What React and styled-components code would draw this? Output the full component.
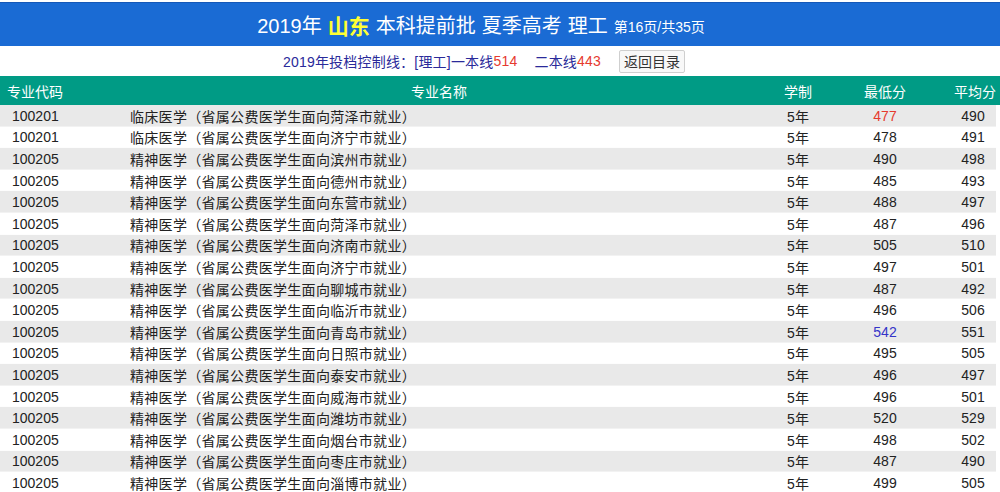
import React from "react";
import styled, { createGlobalStyle } from "styled-components";

const Global = createGlobalStyle`
  html, body { margin: 0; padding: 0; background: #fff; }
  body { font-family: "Liberation Sans", "Noto Sans CJK SC", sans-serif; overflow: hidden; }
`;

const Page = styled.div`
  padding-top: 2px;
  width: 1000px;
`;

const TitleBar = styled.div`
  height: 44px;
  background: #1a6bd4;
  border-top: 1px solid #1558b8;
  box-sizing: border-box;
  display: flex;
  align-items: center;
  justify-content: center;
  color: #fff;
  font-size: 20px;
  gap: 6px;
  padding-right: 38px;
`;

const Hl = styled.span`
  color: #ffff33;
  font-weight: bold;
  font-size: 21px;
`;

const Small = styled.span`
  font-size: 14px;
  margin-top: 3px;
`;

const SubLine = styled.div`
  height: 30px;
  display: flex;
  align-items: center;
  justify-content: center;
  font-size: 14px;
  color: #2a2a9a;
  padding-right: 32px;
  letter-spacing: 0.2px;
`;

const Red = styled.span`
  color: #e63a2e;
`;

const Gap = styled.span`
  display: inline-block;
  width: ${(p) => p.w}px;
`;

const Button = styled.button`
  font-family: inherit;
  font-size: 14px;
  color: #333;
  background: #f8f8f8;
  border: 1px solid #cfcfcf;
  border-radius: 2px;
  height: 23px;
  padding: 0 4px;
  margin-left: 18px;
  display: inline-flex;
  align-items: center;
  letter-spacing: 0;
`;

const cols = "118px 642px 76px 98px 66px";

const HeadRow = styled.div`
  display: grid;
  grid-template-columns: ${cols};
  height: 29px;
  background: #009b85;
  color: #fff;
  font-size: 14px;
  align-items: center;
`;

const HCell = styled.div`
  text-align: ${(p) => p.align || "center"};
  padding-left: ${(p) => p.pl || 0}px;
`;

const Row = styled.div`
  display: grid;
  grid-template-columns: ${cols};
  height: 21.6px;
  align-items: center;
  font-size: 14px;
  color: #222;
  background: ${(p) => (p.odd ? "#e9e9e9" : "#fff")};
  box-shadow: inset 0 -1px 0 ${(p) => (p.odd ? "#f2f2f2" : "#fdfdfd")};
  width: 996px;
`;

const Cell = styled.div`
  text-align: ${(p) => p.align || "center"};
  padding-left: ${(p) => p.pl || 0}px;
  color: ${(p) => p.color || "inherit"};
  letter-spacing: ${(p) => p.ls || 0}px;
  white-space: nowrap;
`;

const rows = [
  ["100201", "临床医学（省属公费医学生面向菏泽市就业）", "477", "490", "#e63a2e"],
  ["100201", "临床医学（省属公费医学生面向济宁市就业）", "478", "491"],
  ["100205", "精神医学（省属公费医学生面向滨州市就业）", "490", "498"],
  ["100205", "精神医学（省属公费医学生面向德州市就业）", "485", "493"],
  ["100205", "精神医学（省属公费医学生面向东营市就业）", "488", "497"],
  ["100205", "精神医学（省属公费医学生面向菏泽市就业）", "487", "496"],
  ["100205", "精神医学（省属公费医学生面向济南市就业）", "505", "510"],
  ["100205", "精神医学（省属公费医学生面向济宁市就业）", "497", "501"],
  ["100205", "精神医学（省属公费医学生面向聊城市就业）", "487", "492"],
  ["100205", "精神医学（省属公费医学生面向临沂市就业）", "496", "506"],
  ["100205", "精神医学（省属公费医学生面向青岛市就业）", "542", "551", "#3434c8"],
  ["100205", "精神医学（省属公费医学生面向日照市就业）", "495", "505"],
  ["100205", "精神医学（省属公费医学生面向泰安市就业）", "496", "497"],
  ["100205", "精神医学（省属公费医学生面向威海市就业）", "496", "501"],
  ["100205", "精神医学（省属公费医学生面向潍坊市就业）", "520", "529"],
  ["100205", "精神医学（省属公费医学生面向烟台市就业）", "498", "502"],
  ["100205", "精神医学（省属公费医学生面向枣庄市就业）", "487", "490"],
  ["100205", "精神医学（省属公费医学生面向淄博市就业）", "499", "505"],
];

export default function App() {
  return (
    <Page>
      <Global />
      <TitleBar>
        <span>2019年</span>
        <Hl>山东</Hl>
        <span>本科提前批</span>
        <span>夏季高考</span>
        <span>理工</span>
        <Small>第16页/共35页</Small>
      </TitleBar>
      <SubLine>
        2019年投档控制线：[理工]一本线<Red>514</Red>
        <Gap w={17} />
        二本线<Red>443</Red>
        <Button>返回目录</Button>
      </SubLine>
      <HeadRow>
        <HCell align="left" pl={7}>专业代码</HCell>
        <HCell>专业名称</HCell>
        <HCell>学制</HCell>
        <HCell>最低分</HCell>
        <HCell pl={16}>平均分</HCell>
      </HeadRow>
      {rows.map((r, i) => (
        <Row key={i} odd={i % 2 === 0}>
          <Cell align="left" pl={12}>{r[0]}</Cell>
          <Cell align="left" pl={12} ls={0.3}>{r[1]}</Cell>
          <Cell>5年</Cell>
          <Cell color={r[4]}>{r[2]}</Cell>
          <Cell pl={12}>{r[3]}</Cell>
        </Row>
      ))}
    </Page>
  );
}
